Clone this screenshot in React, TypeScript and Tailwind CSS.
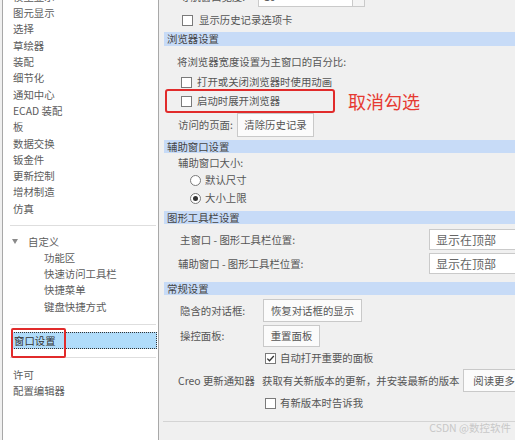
import React from "react";

type TCheckProps = { checked?: boolean };

const Check = ({ checked = false }: TCheckProps) => (
  <span className="flex h-[11px] w-[11px] shrink-0 items-center justify-center border border-[#7a7a7a] bg-white">
    {checked && (
      <svg width="9" height="9" viewBox="0 0 9 9">
        <path d="M1.3 4.6 L3.5 6.8 L7.8 2" stroke="#333" strokeWidth="1.3" fill="none" />
      </svg>
    )}
  </span>
);

const Radio = ({ checked = false }: TCheckProps) => (
  <span className="flex h-[11px] w-[11px] shrink-0 items-center justify-center rounded-full border border-[#7a7a7a] bg-white">
    {checked && <span className="h-[5px] w-[5px] rounded-full bg-[#333]" />}
  </span>
);

const Header = ({ title, className }: { title: string; className: string }) => (
  <div className={`ml-[5px] shrink-0 bg-[#c7dbf7] pl-[3px] text-[#444] ${className}`}>{title}</div>
);

const Btn = ({ label, className }: { label: string; className: string }) => (
  <div className={`flex shrink-0 items-center justify-center border border-[#c9c9c9] bg-[#fbfbfb] text-[#555] ${className}`}>
    {label}
  </div>
);

const Dropdown = () => (
  <div className="flex h-[21px] w-[100px] shrink-0 items-center border border-[#cacaca] bg-white pl-[6px] text-[12px] text-[#666]">
    显示在顶部
  </div>
);

const topItems = [
  "模型显示",
  "图元显示",
  "选择",
  "草绘器",
  "装配",
  "细节化",
  "通知中心",
  "ECAD 装配",
  "板",
  "数据交换",
  "钣金件",
  "更新控制",
  "增材制造",
  "仿真",
];

const customItems = ["功能区", "快速访问工具栏", "快捷菜单", "键盘快捷方式"];

const Sidebar = () => (
  <aside className="ml-[2px] flex h-full w-[157px] shrink-0 flex-col border-x border-[#a8a8a8] bg-white text-[#5c5c5c]">
    <div className="mt-[-11.15px]">
      {topItems.map((item) => (
        <div key={item} className="h-[16.3px] pl-[10px] leading-[16.3px]">
          {item}
        </div>
      ))}
    </div>
    <div className="ml-[7px] mr-[2px] mt-[8px] h-px shrink-0 bg-[#dedede]" />
    <div className="mt-[7.5px]">
      <div className="flex h-[16.3px] items-center pl-[9px] leading-[16.3px]">
        <svg width="6" height="5" viewBox="0 0 6 5">
          <path d="M0 0 H6 L3 5 Z" fill="#8a8a8a" />
        </svg>
        <span className="ml-[10px]">自定义</span>
      </div>
      {customItems.map((item) => (
        <div key={item} className="h-[16.3px] pl-[41px] leading-[16.3px]">
          {item}
        </div>
      ))}
    </div>
    <div className="ml-[7px] mr-[2px] mt-[9px] h-px shrink-0 bg-[#dedede]" />
    <div className="relative ml-[8px] mr-[1px] mt-[7px] flex h-[17px] shrink-0 items-center border border-dotted border-[#333] bg-[#b0dcfa] pl-[2px] text-[#333]">
      窗口设置
      <div className="absolute left-[-1px] top-[-5px] h-[30px] w-[55px] rounded-[2px] border-2 border-[#e12b2b]" />
    </div>
    <div className="ml-[7px] mr-[2px] mt-[8px] h-px shrink-0 bg-[#dedede]" />
    <div className="mt-[8.85px]">
      <div className="h-[16.3px] pl-[10px] leading-[16.3px]">许可</div>
      <div className="h-[16.3px] pl-[10px] leading-[16.3px]">配置编辑器</div>
    </div>
  </aside>
);

const Settings = () => (
  <main className="relative flex min-w-0 flex-1 flex-col overflow-hidden text-[#555]">
    <div className="mt-[-14px] flex h-[21px] shrink-0 items-center pl-[21px]">
      <span className="w-[78px]">导航窗口宽度:</span>
      <div className="flex h-[21px] w-[107px] shrink-0 border border-[#cacaca] bg-white">
        <span className="flex-1 pl-[5px] leading-[19px]">10</span>
        <span className="w-[12px] border-l border-[#cacaca] bg-[#f4f4f4]" />
      </div>
    </div>
    <div className="mt-[5px] flex h-[16px] shrink-0 items-center gap-[6px] pl-[23px]">
      <Check />
      <span>显示历史记录选项卡</span>
    </div>

    <Header title="浏览器设置" className="mt-[4px] h-[14px] leading-[14px]" />
    <div className="mt-[8px] flex h-[16px] shrink-0 items-center pl-[18px]">将浏览器宽度设置为主窗口的百分比:</div>
    <div className="mt-[4px] flex h-[16px] shrink-0 items-center gap-[5px] pl-[22px]">
      <Check />
      <span>打开或关闭浏览器时使用动画</span>
    </div>
    <div className="relative mt-[3px] flex h-[16px] shrink-0 items-center gap-[5px] pl-[22px]">
      <Check />
      <span>启动时展开浏览器</span>
      <div className="absolute left-[6px] top-[-4px] h-[24px] w-[170px] rounded-[3px] border-2 border-[#e12b2b]" />
      <span className="absolute left-[189px] top-[-3px] text-[18px] leading-[22px] text-[#e63a32]">取消勾选</span>
    </div>
    <div className="mt-[4px] flex h-[24px] shrink-0 items-center pl-[19px]">
      <span className="w-[59px]">访问的页面:</span>
      <Btn label="清除历史记录" className="h-[24px] w-[77px]" />
    </div>

    <Header title="辅助窗口设置" className="mt-[3px] h-[13px] leading-[13px]" />
    <div className="mt-[2px] flex h-[16px] shrink-0 items-center pl-[19px]">辅助窗口大小:</div>
    <div className="mt-[1px] flex h-[16px] shrink-0 items-center gap-[4px] pl-[31px]">
      <Radio />
      <span>默认尺寸</span>
    </div>
    <div className="mt-[2px] flex h-[16px] shrink-0 items-center gap-[4px] pl-[31px]">
      <Radio checked />
      <span>大小上限</span>
    </div>

    <Header title="图形工具栏设置" className="mt-[5px] h-[13px] leading-[13px]" />
    <div className="mt-[5px] flex h-[21px] shrink-0 items-center pl-[21px]">
      <span className="w-[249px] shrink-0">主窗口 - 图形工具栏位置:</span>
      <Dropdown />
    </div>
    <div className="mt-[3px] flex h-[21px] shrink-0 items-center pl-[19px]">
      <span className="w-[251px] shrink-0">辅助窗口 - 图形工具栏位置:</span>
      <Dropdown />
    </div>

    <Header title="常规设置" className="mt-[8px] h-[13px] leading-[13px]" />
    <div className="mt-[4px] flex h-[23px] shrink-0 items-center pl-[21px]">
      <span className="w-[83px] shrink-0">隐含的对话框:</span>
      <Btn label="恢复对话框的显示" className="h-[23px] w-[99px]" />
    </div>
    <div className="mt-[3px] flex h-[22px] shrink-0 items-center pl-[21px]">
      <span className="w-[83px] shrink-0">操控面板:</span>
      <Btn label="重置面板" className="h-[22px] w-[57px]" />
    </div>
    <div className="mt-[3px] flex h-[16px] shrink-0 items-center gap-[4px] pl-[106px]">
      <Check checked />
      <span>自动打开重要的面板</span>
    </div>
    <div className="mt-[3px] flex h-[23px] shrink-0 items-center whitespace-nowrap pl-[19px]">
      <span className="w-[84px] shrink-0">Creo 更新通知器</span>
      <span className="shrink-0">获取有关新版本的更新，并安装最新的版本</span>
      <Btn label="阅读更多..." className="ml-[4px] h-[23px] w-[70px]" />
    </div>
    <div className="mt-[3px] flex h-[16px] shrink-0 items-center gap-[4px] pl-[106px]">
      <Check />
      <span>有新版本时告诉我</span>
    </div>

    <div className="ml-[4px] mt-[10px] h-px shrink-0 bg-[#d4d4d4]" />
    <div className="flex h-[11px] shrink-0 justify-end pr-[4px] text-[10.5px] leading-[11px] text-[#c8c8c8]">
      CSDN @数控软件
    </div>
  </main>
);

export default function App() {
  return (
    <div className="flex h-[440px] w-[515px] overflow-hidden bg-[#f0f0f0] text-[10.4px] [font-family:'Noto_Sans_CJK_SC','Noto_Sans',sans-serif]">
      <Sidebar />
      <Settings />
    </div>
  );
}
